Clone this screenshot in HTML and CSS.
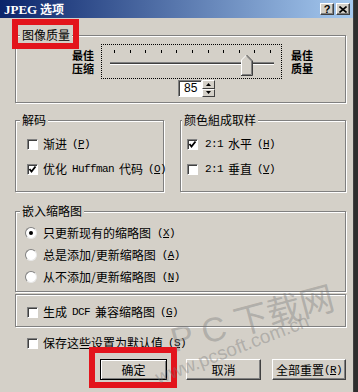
FILE: index.html
```html
<!DOCTYPE html>
<html lang="zh-CN">
<head>
    <meta charset="UTF-8">
    <title>JPEG 选项</title>
    <link rel="stylesheet" href="styles.css">
</head>
<body>
    <div class="window">
        <div class="titlebar">
            <span class="title"><span class="title-lat">JPEG</span> 选项</span>
            <div class="caption-buttons">
                <span class="cap-btn">?</span>
                <span class="cap-btn">
                    <svg width="8" height="7" viewBox="0 0 8 7"><path d="M0.5 0.5 L7.5 6.5 M7.5 0.5 L0.5 6.5" stroke="#000" stroke-width="1.6"/></svg>
                </span>
            </div>
        </div>

        <div class="content">
            <!-- image quality -->
            <fieldset class="group group-quality">
                <legend>图像质量</legend>
                <div class="slider-row">
                    <span class="end-label">最佳<br>压缩</span>
                    <div class="slider">
                        <svg width="179" height="33" viewBox="0 0 179 33">
                            <g stroke="#000" stroke-width="1">
                                <line x1="12.5" y1="5" x2="12.5" y2="8"/>
                                <line x1="28.5" y1="5" x2="28.5" y2="8"/>
                                <line x1="43.5" y1="5" x2="43.5" y2="8"/>
                                <line x1="59.5" y1="5" x2="59.5" y2="8"/>
                                <line x1="74.5" y1="5" x2="74.5" y2="8"/>
                                <line x1="90.5" y1="5" x2="90.5" y2="8"/>
                                <line x1="106.5" y1="5" x2="106.5" y2="8"/>
                                <line x1="121.5" y1="5" x2="121.5" y2="8"/>
                                <line x1="137.5" y1="5" x2="137.5" y2="8"/>
                                <line x1="152.5" y1="5" x2="152.5" y2="8"/>
                                <line x1="168.5" y1="5" x2="168.5" y2="8"/>
                            </g>
                            <rect x="8" y="17" width="164" height="1" fill="#808080"/>
                            <rect x="8" y="18" width="164" height="1" fill="#404040"/>
                            <rect x="8" y="19" width="164" height="1" fill="#fff"/>
                            <polygon points="139,15 144.5,9.5 150,15 150,30 139,30" fill="#d4d0c8"/>
                            <polyline points="139.5,30 139.5,15 144.5,10" fill="none" stroke="#fff"/>
                            <polyline points="144.5,10 150.5,16 150.5,30.5 139,30.5" fill="none" stroke="#404040"/>
                            <polyline points="145,11.5 149.5,16 149.5,29.5 140,29.5" fill="none" stroke="#808080"/>
                        </svg>
                    </div>
                    <span class="end-label">最佳<br>质量</span>
                </div>
                <div class="spinner">
                    <span class="spin-field">85</span>
                    <span class="spin-buttons">
                        <span class="spin-btn"><svg width="5" height="3" viewBox="0 0 5 3"><polygon points="0,3 2.5,0 5,3" fill="#000"/></svg></span>
                        <span class="spin-btn"><svg width="5" height="3" viewBox="0 0 5 3"><polygon points="0,0 5,0 2.5,3" fill="#000"/></svg></span>
                    </span>
                </div>
            </fieldset>

            <div class="two-groups">
                <fieldset class="group group-decode">
                    <legend>解码</legend>
                    <div class="options">
                        <label class="option"><span class="box"></span>渐进<span class="mono">(<u>P</u>)</span></label>
                        <label class="option"><span class="box checked"><svg width="9" height="9" viewBox="0 0 9 9"><polyline points="1.5,4 3.5,6.5 7.5,1.5" fill="none" stroke="#000" stroke-width="1.8"/></svg></span>优化 <span class="mono">Huffman</span> 代码<span class="mono">(<u>O</u>)</span></label>
                    </div>
                </fieldset>
                <fieldset class="group group-sampling">
                    <legend>颜色組成取样</legend>
                    <div class="options">
                        <label class="option"><span class="box checked"><svg width="9" height="9" viewBox="0 0 9 9"><polyline points="1.5,4 3.5,6.5 7.5,1.5" fill="none" stroke="#000" stroke-width="1.8"/></svg></span><span class="mono">2:1</span> 水平<span class="mono">(<u>H</u>)</span></label>
                        <label class="option"><span class="box"></span><span class="mono">2:1</span> 垂直<span class="mono">(<u>V</u>)</span></label>
                    </div>
                </fieldset>
            </div>

            <fieldset class="group group-thumbs">
                <legend>嵌入缩略图</legend>
                <div class="radios">
                    <label class="option"><span class="radio on"></span>只更新现有的缩略图<span class="mono">(<u>X</u>)</span></label>
                    <label class="option"><span class="radio"></span>总是添加/更新缩略图<span class="mono">(<u>A</u>)</span></label>
                    <label class="option"><span class="radio"></span>从不添加/更新缩略图<span class="mono">(<u>N</u>)</span></label>
                </div>
            </fieldset>

            <div class="group group-dcf">
                <label class="option"><span class="box"></span>生成 <span class="mono">DCF</span> 兼容缩略图<span class="mono">(<u>G</u>)</span></label>
            </div>

            <label class="option save-row"><span class="box"></span>保存这些设置为默认值<span class="mono">(<u>S</u>)</span></label>

            <div class="buttons">
                <span class="btn btn-ok">确定</span>
                <span class="btn btn-cancel">取消</span>
                <span class="btn btn-reset">全部重置<span class="mono">(<u>R</u>)</span></span>
            </div>
        </div>

        <!-- annotations and watermark over the screenshot -->
        <div class="mark mark-legend"></div>
        <div class="mark mark-ok"></div>
        <span class="watermark wm-big">P C 下载网</span>
        <span class="watermark wm-url">www.pcsoft.com.cn</span>
    </div>
</body>
</html>
```

FILE: styles.css
```css
body {
    margin: 0;
    background-color: #2e2e2e;
    font-family: "Noto Sans CJK SC", sans-serif;
    font-size: 12px;
    color: #000;
}

.window {
    position: relative;
    width: 353px;
    height: 392px;
    background-color: #d4d0c8;
    border-right: 1px solid #404040;
    overflow: hidden;
}

.titlebar {
    height: 18px;
    display: flex;
    justify-content: space-between;
    align-items: center;
    padding: 0 3px 0 4px;
    background: linear-gradient(to right, #0a246a, #a6caf0);
}

.title {
    color: #fff;
    font-weight: bold;
    font-size: 12px;
    line-height: 14px;
}

.title-lat {
    font-family: "Liberation Serif", serif;
    font-size: 13px;
}

.caption-buttons {
    display: flex;
    gap: 2px;
}

.cap-btn {
    width: 14px;
    height: 12px;
    box-sizing: border-box;
    display: flex;
    justify-content: center;
    align-items: center;
    background-color: #d4d0c8;
    border: 1px solid;
    border-color: #fff #404040 #404040 #fff;
    box-shadow: inset -1px -1px 0 #808080;
    font-family: "Liberation Sans", sans-serif;
    font-weight: bold;
    font-size: 11px;
    line-height: 10px;
}

.content {
    padding-left: 15px;
}

/* etched group boxes */
.group {
    margin: 0;
    padding: 0;
    min-width: 0;
    box-sizing: border-box;
    border: 1px solid #808080;
    box-shadow: 1px 1px 0 #fff, inset 1px 1px 0 #fff;
}

.group legend {
    margin-left: 4px;
    padding: 0 2px;
    line-height: 14px;
    background-color: #d4d0c8;
}

.group-quality {
    width: 331px;
    margin-top: 10px;
    padding-bottom: 5px;
}

.slider-row {
    display: flex;
    align-items: center;
    margin-top: 2px;
    padding-left: 56px;
}

.end-label {
    font-weight: bold;
    font-size: 11px;
    line-height: 13px;
}

.slider {
    width: 181px;
    height: 35px;
    box-sizing: border-box;
    border: 1px dotted #000;
    margin: 0 9px 0 7px;
}

.slider svg {
    display: block;
}

.spinner {
    display: flex;
    margin: 1px 0 0 162px;
    height: 17px;
}

.spin-field {
    width: 24px;
    box-sizing: border-box;
    background-color: #fff;
    border: 1px solid;
    border-color: #808080 #fff #fff #808080;
    box-shadow: inset 1px 1px 0 #404040;
    padding-left: 5px;
    line-height: 15px;
    font-family: "Liberation Sans", sans-serif;
    font-size: 12px;
}

.spin-buttons {
    display: flex;
    flex-direction: column;
    width: 13px;
}

.spin-btn {
    flex: 1;
    display: flex;
    justify-content: center;
    align-items: center;
    box-sizing: border-box;
    border: 1px solid;
    border-color: #fff #404040 #404040 #fff;
}

.spin-btn svg {
    display: block;
}

.two-groups {
    display: flex;
    gap: 16px;
    margin-top: 10px;
}

.group-decode {
    width: 149px;
}

.group-sampling {
    width: 166px;
}

.group-sampling legend {
    margin-left: 1px;
}

.options {
    display: flex;
    flex-direction: column;
    gap: 7px;
    padding: 8px 0 13px 11px;
}

.group-sampling .options {
    padding-left: 6px;
}

.group-sampling .box {
    margin-right: 2px;
}

.option {
    display: flex;
    align-items: center;
    gap: 5px;
    height: 18px;
    line-height: 18px;
    white-space: nowrap;
}

.mono {
    font-family: "Liberation Mono", monospace;
    font-size: 11px;
    letter-spacing: -0.6px;
}

.box {
    width: 11px;
    height: 11px;
    flex: none;
    box-sizing: border-box;
    display: flex;
    justify-content: center;
    align-items: center;
    background-color: #fff;
    border: 1px solid;
    border-color: #808080 #fff #fff #808080;
    box-shadow: inset 1px 1px 0 #404040;
}

.box svg {
    display: block;
}

.group-thumbs {
    width: 331px;
    margin-top: 12px;
}

.radios {
    display: flex;
    flex-direction: column;
    gap: 4px;
    padding: 6px 0 5px 9px;
}

.radios .option {
    gap: 6px;
}

.radio {
    width: 12px;
    height: 12px;
    flex: none;
    box-sizing: border-box;
    border-radius: 50%;
    background-color: #fff;
    border: 1px solid;
    border-color: #808080 #e8e8e8 #e8e8e8 #808080;
    display: flex;
    justify-content: center;
    align-items: center;
}

.radio.on::after {
    content: "";
    width: 4px;
    height: 4px;
    border-radius: 50%;
    background-color: #000;
}

.group-dcf {
    width: 331px;
    margin-top: 2px;
    padding: 8px 0 5px 11px;
}

.save-row {
    margin-top: 7px;
    padding-left: 12px;
}

.buttons {
    display: flex;
    margin-top: 7px;
    padding-left: 85px;
}

.btn {
    height: 21px;
    box-sizing: border-box;
    display: flex;
    justify-content: center;
    align-items: center;
    background-color: #d4d0c8;
    border: 1px solid;
    border-color: #fff #404040 #404040 #fff;
    box-shadow: inset -1px -1px 0 #808080;
}

.btn-ok {
    width: 67px;
    border-color: #000;
    box-shadow: inset 1px 1px 0 #fff, inset -1px -1px 0 #808080;
}

.btn-cancel {
    width: 75px;
    margin-left: 19px;
}

.btn-reset {
    width: 74px;
    margin-left: 11px;
}

/* red annotation boxes */
.mark {
    position: absolute;
    box-sizing: border-box;
    border: 6px solid #e3141c;
}

.mark-legend {
    left: 12px;
    top: 19px;
    width: 67px;
    height: 30px;
}

.mark-ok {
    left: 89px;
    top: 347px;
    width: 88px;
    height: 41px;
}

.watermark {
    position: absolute;
    color: rgba(120, 120, 120, 0.4);
    white-space: nowrap;
    transform-origin: left bottom;
    pointer-events: none;
}

.wm-big {
    left: 176px;
    top: 322px;
    font-family: "Liberation Sans", "Noto Sans CJK SC", sans-serif;
    font-size: 34px;
    line-height: 36px;
    transform: rotate(-15deg);
}

.wm-url {
    left: 160px;
    top: 368px;
    font-family: "Liberation Sans", sans-serif;
    font-size: 19px;
    line-height: 20px;
    transform: rotate(-21deg);
}
```
